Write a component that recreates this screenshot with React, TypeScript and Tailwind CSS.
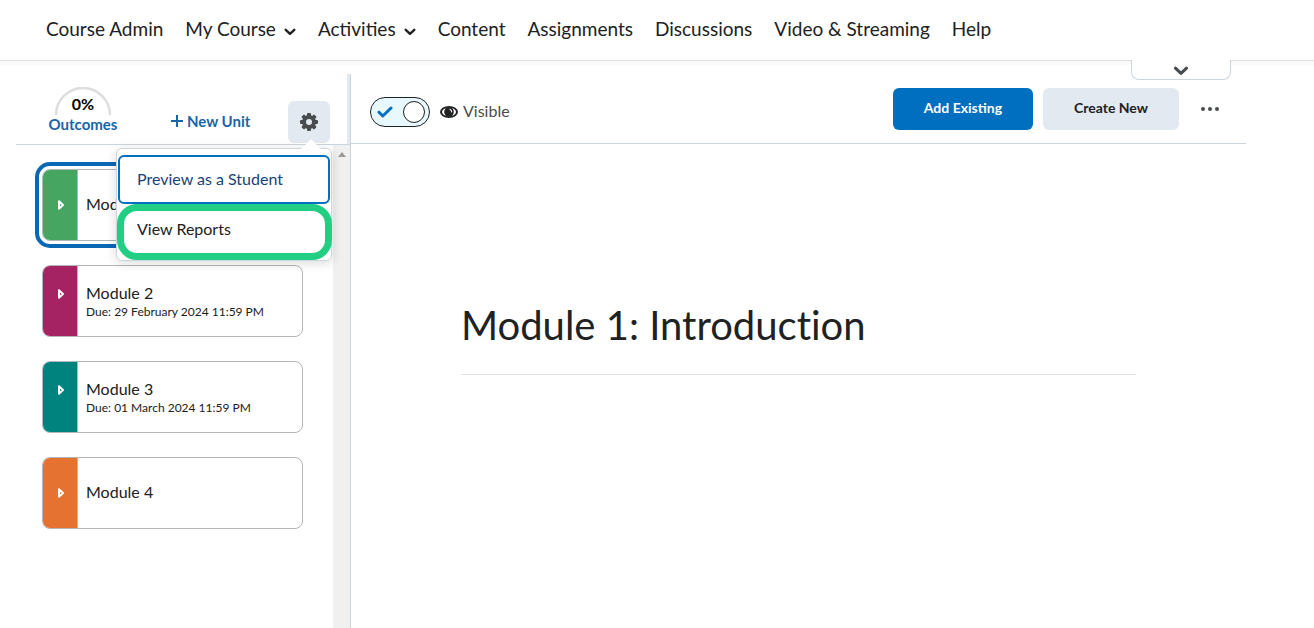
type NavItem = { label: string; menu?: boolean };

const navItems: NavItem[] = [
  { label: "Course Admin" },
  { label: "My Course", menu: true },
  { label: "Activities", menu: true },
  { label: "Content" },
  { label: "Assignments" },
  { label: "Discussions" },
  { label: "Video & Streaming" },
  { label: "Help" },
];

const modules = [
  { name: "Module 1", color: "bg-[#46a661]", selected: true },
  { name: "Module 2", due: "Due: 29 February 2024 11:59 PM", color: "bg-[#a52263]" },
  { name: "Module 3", due: "Due: 01 March 2024 11:59 PM", color: "bg-[#00827f]" },
  { name: "Module 4", color: "bg-[#e57231]" },
];

function Chevron({ className }: { className: string }) {
  return (
    <svg viewBox="0 0 14 9" className={className} fill="none" aria-hidden="true">
      <path
        d="M2 2l5 4.6L12 2"
        stroke="currentColor"
        strokeWidth="2.8"
        strokeLinecap="round"
        strokeLinejoin="round"
      />
    </svg>
  );
}

function GearIcon() {
  const teeth = [0, 45, 90, 135, 180, 225, 270, 315];
  return (
    <svg viewBox="0 0 18 18" className="size-[18px] text-[#494c4e]" aria-hidden="true">
      {teeth.map((a) => (
        <rect
          key={a}
          x="7"
          y="0"
          width="4"
          height="5"
          rx="1"
          fill="currentColor"
          transform={`rotate(${a} 9 9)`}
        />
      ))}
      <circle cx="9" cy="9" r="5" fill="none" stroke="currentColor" strokeWidth="4" />
    </svg>
  );
}

function EyeIcon() {
  return (
    <svg viewBox="0 0 18 12" className="h-3 w-[18px]" aria-hidden="true">
      <ellipse cx="9" cy="6" rx="9" ry="6" fill="#202122" />
      <ellipse cx="9" cy="6" rx="7" ry="4.2" fill="#fff" />
      <circle cx="9" cy="6" r="4.8" fill="#202122" />
      <path d="M9.6 3.4a2.4 2.4 0 0 1 1.9 3" stroke="#fff" strokeWidth="1.1" fill="none" />
    </svg>
  );
}

function Header() {
  return (
    <header className="relative border-b border-[#dcdfe3] shadow-[0_4px_0_#fafafa]">
      <nav className="flex h-[60px] items-center gap-[22px] pb-px pl-[46px] text-[19px]">
        {navItems.map((item) =>
          item.menu ? (
            <button key={item.label} className="flex items-center gap-2 whitespace-nowrap">
              {item.label}
              <Chevron className="mt-1 h-2 w-3" />
            </button>
          ) : (
            <a key={item.label} href="#" className="whitespace-nowrap">
              {item.label}
            </a>
          ),
        )}
      </nav>
      <button
        aria-label="Show banner"
        className="absolute top-full right-[83px] flex h-5 w-[100px] items-center justify-center rounded-b-lg border border-t-0 border-[#cdd5dc] bg-white pt-0.5 text-[#494c4e]"
      >
        <Chevron className="h-[10px] w-4" />
      </button>
    </header>
  );
}

function SettingsMenu() {
  return (
    <div className="relative">
      <button
        aria-label="Settings"
        aria-expanded="true"
        className="flex size-[42px] items-center justify-center rounded-md bg-[#e3e9f1]"
      >
        <GearIcon />
      </button>
      <div
        role="menu"
        className="absolute top-[47px] -right-0.5 z-10 flex w-[216px] flex-col rounded-md border border-[#cdd5dc] bg-white px-px py-1.5 shadow-[0_2px_12px_rgba(0,0,0,0.15)]"
      >
        <svg
          viewBox="0 0 20 10"
          className="absolute right-2.5 bottom-full h-2.5 w-5"
          aria-hidden="true"
        >
          <path d="M0 10L10 0l10 10z" fill="#fff" />
        </svg>
        <button
          role="menuitem"
          className="h-[49px] rounded-md border-2 border-[#006fbf] px-[17px] pb-0.5 text-left text-[#1a4275]"
        >
          Preview as a Student
        </button>
        <button role="menuitem" className="h-[50px] px-[19px] text-left">
          View Reports
        </button>
        <div className="pointer-events-none absolute -right-px bottom-0 left-0 h-14 rounded-[20px] border-7 border-[#22ce83]" />
      </div>
    </div>
  );
}

function Sidebar() {
  return (
    <aside className="ml-4 flex w-[335px] shrink-0 flex-col border-r border-[#cdd5dc]">
      <div className="flex h-[71px] items-start border-b border-[#cdd5dc]">
        <a href="#" className="mt-3 ml-8 flex w-[70px] flex-col items-center font-bold text-[#1a66a8]">
          <span className="relative flex h-7 w-[58px] items-end justify-center">
            <svg viewBox="0 0 58 29" className="absolute inset-0" fill="none" aria-hidden="true">
              <path d="M2 29a27 27 0 0 1 54 0" stroke="#dedede" strokeWidth="2.5" />
            </svg>
            <span className="text-base leading-5 text-black">0%</span>
          </span>
          <span className="text-[15px] leading-5">Outcomes</span>
        </a>
        <button className="mt-[37px] ml-[53px] flex items-center gap-1 text-[15px] leading-5 font-bold whitespace-nowrap text-[#1a66a8]">
          <svg viewBox="0 0 12 12" className="size-3" aria-hidden="true">
            <path d="M6 0v12M0 6h12" stroke="currentColor" strokeWidth="2" />
          </svg>
          New Unit
        </button>
        <div className="mt-[27px] ml-auto">
          <SettingsMenu />
        </div>
        <div className="ml-[17px] h-full w-[3px] bg-[#e3e9f1]" />
      </div>
      <div className="flex flex-1">
        <ul className="flex flex-1 flex-col gap-6 pt-6 pr-[30px] pl-[26px]">
          {modules.map((m) => (
            <li
              key={m.name}
              className={`flex h-[72px] overflow-hidden rounded-lg border border-[#b1b6ba] ${
                m.selected ? "outline-4 outline-offset-3 outline-[#0a68b4]" : ""
              }`}
            >
              <button
                aria-label={`Expand ${m.name}`}
                className={`flex w-[35px] justify-center border-r border-[#b1b6ba] ${m.color} ${
                  m.due ? "pt-[22px]" : "items-center"
                }`}
              >
                <svg viewBox="0 0 8 12" className="ml-0.5 h-3 w-2" fill="none" aria-hidden="true">
                  <path
                    d="M2 2.2v7.6L6 6z"
                    stroke="#fff"
                    strokeWidth="2"
                    strokeLinejoin="round"
                  />
                </svg>
              </button>
              <a
                href="#"
                className={`flex flex-1 flex-col justify-center pl-2 ${m.due ? "pt-0.5" : "pb-0.5"}`}
              >
                <span className="text-base leading-5">{m.name}</span>
                {m.due && <span className="text-xs leading-[18px]">{m.due}</span>}
              </a>
            </li>
          ))}
        </ul>
        <div className="flex w-[17px] justify-center bg-[#f0f0f0] pt-[7px]" aria-hidden="true">
          <svg viewBox="0 0 8 5" className="h-[5px] w-2">
            <path d="M0 5l4-5 4 5z" fill="#9a9a9a" />
          </svg>
        </div>
      </div>
    </aside>
  );
}

function Content() {
  return (
    <main className="mr-[68px] flex-1">
      <div className="flex h-[70px] items-center border-b border-[#cdd5dc] pr-[15px] pl-[19px]">
        <label className="mt-1.5 flex items-center">
          <input type="checkbox" role="switch" defaultChecked className="sr-only" />
          <span className="flex h-[30px] w-[60px] items-center justify-between rounded-full border border-[#202122] bg-[#e8f8ff] pr-1 pl-1.5">
            <svg viewBox="0 0 16 12" className="h-3 w-4" fill="none" aria-hidden="true">
              <path
                d="M2 6.2l3.8 3.8L14 2"
                stroke="#006fbf"
                strokeWidth="3"
                strokeLinecap="round"
                strokeLinejoin="round"
              />
            </svg>
            <span className="size-[22px] rounded-full border border-[#202122] bg-white" />
          </span>
          <span className="ml-2.5 flex items-center gap-[5px] text-base leading-5 text-[#494c4e]">
            <EyeIcon />
            <span className="pb-0.5">Visible</span>
          </span>
        </label>
        <div className="ml-auto flex gap-2.5 text-sm font-bold">
          <button className="h-[42px] rounded-md bg-[#006fbf] px-[31px] pb-0.5 text-white">
            Add Existing
          </button>
          <button className="h-[42px] rounded-md bg-[#e3e9f1] px-[31px] pb-0.5">Create New</button>
          <button
            aria-label="More actions"
            className="flex size-[42px] items-center justify-center gap-[3px]"
          >
            <span className="size-1 rounded-full bg-[#494c4e]" />
            <span className="size-1 rounded-full bg-[#494c4e]" />
            <span className="size-1 rounded-full bg-[#494c4e]" />
          </button>
        </div>
      </div>
      <div className="px-[110px] pt-[156px]">
        <h1 className="border-b border-[#e0e3e6] pb-6 text-[40px] leading-[50px] [font-variant-ligatures:none]">
          Module 1: Introduction
        </h1>
      </div>
    </main>
  );
}

export default function App() {
  return (
    <div className="flex min-h-screen flex-col bg-white font-['Lato',sans-serif] text-[#202122]">
      <Header />
      <div className="flex flex-1 pt-[13px]">
        <Sidebar />
        <Content />
      </div>
    </div>
  );
}
